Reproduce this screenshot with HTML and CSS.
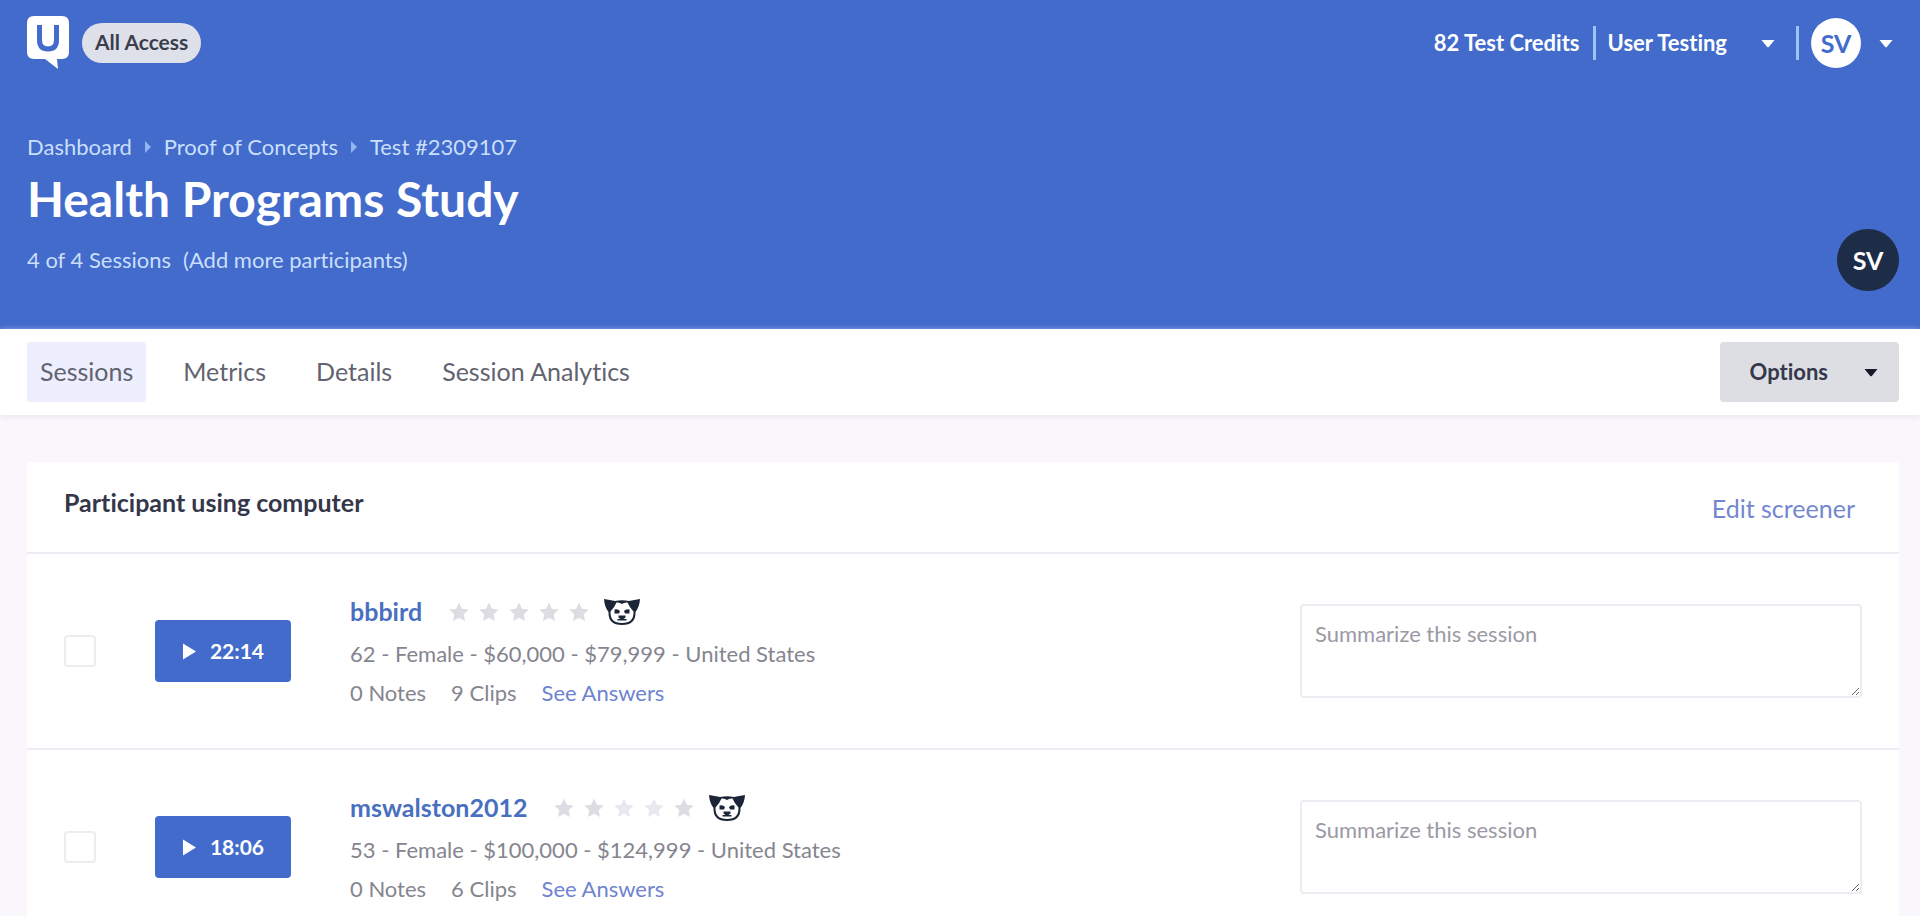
FILE: index.html
```html
<!DOCTYPE html>
<html lang="en">
<head>
<meta charset="utf-8">
<title>Health Programs Study</title>
<link rel="stylesheet" href="styles.css">
</head>
<body>
<svg class="sprite" aria-hidden="true">
  <symbol id="star" viewBox="0 0 20 20"><path d="M10 0.5l2.900 6.200 6.800.9-5 4.700 1.300 6.800-6-3.300-6 3.300 1.300-6.800-5-4.700 6.800-.9z"/></symbol>
  <symbol id="caret" viewBox="0 0 14 9"><path d="M0.5 1h13L8 7.800Q7 8.800 6 7.800z"/></symbol>
  <symbol id="play" viewBox="0 0 14 17"><path d="M1 .5v16L14 8.500z"/></symbol>
  <symbol id="panda" viewBox="0 0 38 28">
    <path fill="#1c2438" d="M1 1Q7 2 12 3Q19 1.500 26 3Q31 2 37 1Q36.500 9 32.500 14Q33 27 19 27Q5 27 5.500 14Q1.500 9 1 1z"/>
    <path fill="#fff" d="M13.500 4.500Q16.500 4 19 6Q21.500 4 24.500 4.500Q26 8.500 30.500 13.500Q31 25 19 25Q7 25 7.500 13.500Q12 8.500 13.500 4.500z"/>
    <path fill="#1c2438" d="M11.500 11.500Q15 10.500 17 13L16 15.500H11.500zM26.500 11.500Q23 10.500 21 13L22 15.500H26.500zM15.500 17.500h7V19.500L20.500 21H23.500V22.500H14.500V21H17.500L15.500 19.500z"/>
  </symbol>
</svg>

<header class="hero">
  <div class="topbar">
    <div class="brand">
      <svg class="logo" viewBox="0 0 42 54" role="img" aria-label="UserTesting">
        <path fill="#fff" d="M7 0h28q7 0 7 7v29q0 7-7 7h-5l1 10-13-10H7q-7 0-7-7V7q0-7 7-7z"/>
        <path fill="none" stroke="#426bcc" stroke-width="5" d="M12.500 9v15q0 9 8.500 9t8.500-9V9"/>
      </svg>
      <span class="badge">All Access</span>
    </div>
    <div class="account">
      <a class="credits" href="#">82 Test Credits</a>
      <button class="menu team" type="button">User Testing <svg class="caret"><use href="#caret"/></svg></button>
      <button class="menu user" type="button"><span class="avatar">SV</span><svg class="caret"><use href="#caret"/></svg></button>
    </div>
  </div>
  <div class="study">
    <div>
      <nav class="crumbs" aria-label="Breadcrumb">
        <a href="#">Dashboard</a><svg class="sep" viewBox="0 0 6 12"><path d="M0 0l6 6-6 6z"/></svg><a href="#">Proof of Concepts</a><svg class="sep" viewBox="0 0 6 12"><path d="M0 0l6 6-6 6z"/></svg><a href="#">Test #2309107</a>
      </nav>
      <h1>Health Programs Study</h1>
      <p class="count"><span>4 of 4 Sessions</span><a href="#">(Add more participants)</a></p>
    </div>
    <span class="avatar owner">SV</span>
  </div>
</header>

<div class="tabbar">
  <nav class="tabs">
    <a class="tab active" href="#">Sessions</a>
    <a class="tab" href="#">Metrics</a>
    <a class="tab" href="#">Details</a>
    <a class="tab" href="#">Session Analytics</a>
  </nav>
  <button class="options" type="button">Options <svg class="caret"><use href="#caret"/></svg></button>
</div>

<main>
  <section class="card">
    <div class="card-head">
      <h2>Participant using computer</h2>
      <a class="edit" href="#">Edit screener</a>
    </div>
    <article class="row">
      <input class="tick" type="checkbox" aria-label="Select bbbird">
      <button class="watch" type="button"><svg class="play"><use href="#play"/></svg>22:14</button>
      <div class="info">
        <div class="who">
          <a class="name" href="#">bbbird</a>
          <span class="stars" role="img" aria-label="Not rated"><svg><use href="#star"/></svg><svg><use href="#star"/></svg><svg><use href="#star"/></svg><svg><use href="#star"/></svg><svg><use href="#star"/></svg></span>
          <svg class="panda"><use href="#panda"/></svg>
        </div>
        <p>62 - Female - $60,000 - $79,999 - United States</p>
        <p class="facts"><span>0 Notes</span><span>9 Clips</span><a href="#">See Answers</a></p>
      </div>
      <textarea class="summary" placeholder="Summarize this session" aria-label="Session summary"></textarea>
    </article>
    <article class="row">
      <input class="tick" type="checkbox" aria-label="Select mswalston2012">
      <button class="watch" type="button"><svg class="play"><use href="#play"/></svg>18:06</button>
      <div class="info">
        <div class="who">
          <a class="name" href="#">mswalston2012</a>
          <span class="stars" role="img" aria-label="Not rated"><svg><use href="#star"/></svg><svg><use href="#star"/></svg><svg class="faint"><use href="#star"/></svg><svg class="faint"><use href="#star"/></svg><svg><use href="#star"/></svg></span>
          <svg class="panda"><use href="#panda"/></svg>
        </div>
        <p>53 - Female - $100,000 - $124,999 - United States</p>
        <p class="facts"><span>0 Notes</span><span>6 Clips</span><a href="#">See Answers</a></p>
      </div>
      <textarea class="summary" placeholder="Summarize this session" aria-label="Session summary"></textarea>
    </article>
  </section>
</main>
</body>
</html>
```
FILE: styles.css
```css
* { box-sizing: border-box; }

body {
  margin: 0;
  background: #f9f7fc;
  color: #85858f;
  font: 22px/28px Lato, "Open Sans", sans-serif;
  font-variant-ligatures: none;
}

h1, h2, p { margin: 0; }
a { color: inherit; text-decoration: none; }
button { border: 0; font: inherit; cursor: pointer; }
.sprite { position: absolute; width: 0; height: 0; }
.caret { width: 14px; height: 9px; fill: currentColor; }

.hero {
  display: flex;
  flex-direction: column;
  gap: 63px;
  padding: 16px 21px 38px 27px;
  background: #426bcc;
  color: #fff;
}

.topbar, .brand, .account, .menu, .study, .crumbs, .count {
  display: flex;
  align-items: center;
}

.topbar, .study { justify-content: space-between; }
.topbar { height: 54px; }
.brand { gap: 13px; }
.logo { width: 42px; height: 54px; }

.badge {
  padding: 5px 13px 7px;
  border-radius: 20px;
  background: #dfe1ea;
  color: #3b3e4c;
  font-size: 21px;
  font-weight: 700;
}

.account { padding-right: 6px; font-weight: 700; }
.credits { padding-right: 13px; }
.menu {
  height: 34px;
  padding: 0 0 0 12px;
  border-left: 3px solid #9cc4fa;
  background: none;
  color: #fff;
  font-weight: 700;
}
.team { gap: 34px; margin-right: 21px; }
.user { gap: 18px; }

.avatar {
  display: grid;
  place-items: center;
  width: 50px;
  height: 50px;
  border-radius: 50%;
  background: #fff;
  color: #426bcc;
  font-size: 25px;
  font-weight: 700;
}
.owner {
  align-self: flex-end;
  width: 62px;
  height: 62px;
  background: #1d2d47;
  color: #fff;
}

.crumbs { gap: 13px; color: #c9dffb; }
.sep { width: 6px; height: 12px; fill: #8fb5f2; }
h1 { margin: 10px 0 19px; font-size: 48px; line-height: 56px; }
.count { gap: 12px; padding-bottom: 17px; color: #c9dffb; }

.tabbar {
  display: flex;
  justify-content: space-between;
  padding: 13px 21px 13px 27px;
  background: #fff;
  box-shadow: 0 2px 6px #e9e7ee;
}
.tabs { display: flex; gap: 24px; }
.tab {
  padding: 15px 13px 17px;
  border-radius: 3px;
  color: #62636f;
  font-size: 25px;
}
.active { background: #edeefe; }
.options {
  display: flex;
  align-items: center;
  gap: 36px;
  padding: 0 21px 0 30px;
  border-radius: 4px;
  background: #dddee4;
  color: #34384a;
  font-weight: 700;
}
.options .caret { color: #17192a; }

main { padding: 47px 21px 0 27px; }
.card { background: #fff; border-radius: 4px; }
.card-head {
  display: flex;
  justify-content: space-between;
  padding: 25px 44px 32px 37px;
}
h2 { color: #34364a; font-size: 25px; line-height: 30px; }
.edit { padding-top: 9px; color: #7387cf; font-size: 25px; line-height: 24px; }

.row {
  display: grid;
  grid-template-columns: 32px 136px 1fr 562px;
  align-items: center;
  height: 196px;
  padding: 0 37px;
  border-top: 2px solid #eeecf3;
}
.tick {
  appearance: none;
  width: 32px;
  height: 32px;
  margin: 0;
  border: 2px solid #eeecf1;
  border-radius: 4px;
}
.watch {
  display: flex;
  align-items: center;
  justify-content: center;
  gap: 14px;
  width: 136px;
  height: 62px;
  margin-left: 59px;
  border-radius: 4px;
  background: #426bcc;
  color: #fff;
  font-size: 21px;
  font-weight: 700;
}
.play { width: 14px; height: 17px; fill: #fff; }
.info { padding-left: 118px; }
.who { display: flex; align-items: center; height: 34px; }
.name { padding-bottom: 3px; color: #496fc0; font-size: 25px; font-weight: 700; line-height: 32px; }
.stars { display: flex; gap: 10px; margin: 0 14px 0 27px; fill: #dcdce3; }
.stars svg { width: 20px; height: 20px; }
.stars .faint { fill: #ebe7ee; }
.panda { width: 38px; height: 28px; }
.info p { margin-top: 11px; }
.facts { display: flex; gap: 25px; }
.facts a { color: #6f83d0; }
.summary {
  height: 94px;
  padding: 14px 13px;
  border: 2px solid #efebf3;
  border-radius: 4px;
  background: #fff;
  font: inherit;
  resize: vertical;
}
.summary::placeholder { color: #9b99a4; }
```
